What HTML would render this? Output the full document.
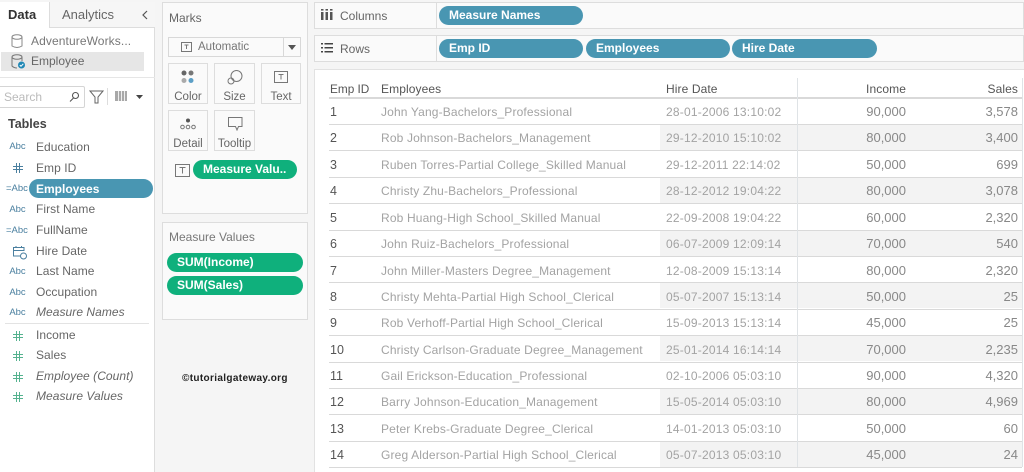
<!DOCTYPE html>
<html><head><meta charset="utf-8"><style>
html,body{margin:0;padding:0;width:1024px;height:472px;overflow:hidden;background:#f5f5f5;font-family:"Liberation Sans",sans-serif;font-size:12px;color:#555}
body{filter:blur(.3px)}
div,span,svg{position:absolute;box-sizing:border-box}
.t{white-space:nowrap;line-height:14px}
.f{left:36px;color:#666;font-size:12px;letter-spacing:.05px}
.a{left:9px;width:17px;text-align:center;font-size:9.5px;color:#4a7f9f;line-height:12px;white-space:nowrap}
.b{background:#fafafa;border:1px solid #ddd;width:40px;height:41px;text-align:center;color:#666;font-size:11.5px}
.b i{position:absolute;left:0;right:0;bottom:-1px;font-style:normal;line-height:13px}
.p{background:#4996b2;color:#fff;font-weight:bold;font-size:12px;border-radius:10px;height:19px;line-height:18px;padding-left:11px;white-space:nowrap}
.g{background:#0fb07c;border-radius:10px}
.r{left:314px;width:710px;height:26.4px}
.r span{top:6px;line-height:14px;white-space:nowrap;color:#a3a3a3;font-size:12px}
.r span:nth-child(1){color:#555;font-size:12.5px}
.r span:nth-child(2){letter-spacing:.15px}
.r span:nth-child(3){letter-spacing:.21px}
.r span:nth-child(4),.r span:nth-child(5){font-size:13px;color:#888}
.r span:nth-child(4){right:118px}
.r span:nth-child(5){right:6px}
.r.hd span{color:#555;font-size:12px;letter-spacing:.1px}
.r.hd span:nth-child(1){font-size:11.8px;letter-spacing:0}
.l{left:329px;width:693px;height:1px;background:#d9d9d9}
.s{background:#f3f3f3;left:660px;width:362px;height:25px}
.hs{left:13px}
</style></head><body>

<!-- left sidebar -->
<div style="left:0;top:2px;width:155px;height:470px;background:#fff;border-right:1px solid #ddd"></div>
<div style="left:49px;top:2px;width:106px;height:26px;background:#f6f6f6;border-left:1px solid #ddd;border-bottom:1px solid #ddd"></div>
<div class="t" style="left:8px;top:8px;font-weight:bold;color:#333;font-size:13px">Data</div>
<div class="t" style="left:62px;top:8px;color:#666;font-size:13px">Analytics</div>
<svg style="left:141px;top:10px" width="8" height="10"><path d="M6 1L2 5L6 9" fill="none" stroke="#555" stroke-width="1.2"/></svg>
<svg style="left:10px;top:33px" width="14" height="16" fill="none" stroke="#888"><ellipse cx="7" cy="4" rx="5" ry="2.3"/><path d="M2 4V13Q7 16 12 13V4"/></svg>
<div class="t" style="left:31px;top:34px;color:#777;font-size:12px;letter-spacing:.1px">AdventureWorks...</div>
<div style="left:1px;top:52px;width:143px;height:19px;background:#e6e6e6"></div>
<svg style="left:10px;top:53px" width="16" height="17" fill="none" stroke="#777"><ellipse cx="7" cy="4" rx="5" ry="2.3"/><path d="M2 4V13Q4 15 7 15M12 4V8"/><circle cx="11.5" cy="12" r="3.5" fill="#1f87b5" stroke="none"/><path d="M9.800 12L11 13.300L13.300 10.800" stroke="#fff" stroke-width="1"/></svg>
<div class="t" style="left:31px;top:54px;color:#666;font-size:12px">Employee</div>
<div style="left:0;top:77px;width:155px;height:1px;background:#e6e6e6"></div>
<div style="left:-2px;top:86px;width:87px;height:22px;background:#fff;border:1px solid #d5d5d5;border-radius:2px"></div>
<div class="t" style="left:4px;top:90px;color:#bbb;font-size:12px">Search</div>
<svg style="left:69px;top:91px" width="11" height="12" fill="none" stroke="#555" stroke-width="1.1"><circle cx="6.5" cy="4.5" r="3"/><path d="M4.500 7L1 10.500"/></svg>
<svg style="left:89px;top:89px" width="15" height="15" fill="none" stroke="#666"><path d="M1 2H14L9 8V14H6V8Z"/></svg>
<div style="left:107px;top:88px;width:1px;height:17px;background:#ddd"></div>
<svg style="left:115px;top:91px" width="12" height="10"><path d="M0 0H12V10H0Z" fill="#a8a8a8"/><path d="M3.500 0V10M6.500 0V10M9.500 0V10" stroke="#eee"/></svg>
<svg style="left:135px;top:94px" width="9" height="6"><path d="M1 1H8L4.500 5Z" fill="#444"/></svg>
<div class="t" style="left:8px;top:117px;font-weight:bold;color:#444;font-size:12.5px">Tables</div>

<div class="a" style="top:141px">Abc</div><div class="t f" style="top:140px">Education</div>
<svg class="hs" style="top:163px" width="10" height="10" fill="none" stroke="#4a7f9f" stroke-width="1"><path d="M3.500 0V10M6.500 0V10M0 3.500H10M0 6.500H10"/></svg><div class="t f" style="top:161px">Emp ID</div>
<div class="a" style="top:183px;left:6px;width:20px">=Abc</div>
<div style="left:29px;top:179px;width:124px;height:19px;background:#4996b2;border-radius:10px"></div>
<div class="t" style="left:36px;top:182px;color:#fff;font-weight:bold;font-size:12px">Employees</div>
<div class="a" style="top:204px">Abc</div><div class="t f" style="top:202px">First Name</div>
<div class="a" style="top:225px;left:6px;width:20px">=Abc</div><div class="t f" style="top:223px">FullName</div>
<svg style="left:12px;top:245px" width="16" height="15" fill="none" stroke="#4a7f9f"><path d="M9 11H1.500V2.500H12V6M1.500 5.500H12M4 1V3M9.500 1V3"/><circle cx="11.500" cy="11" r="3"/></svg>
<div class="t f" style="top:244px">Hire Date</div>
<div class="a" style="top:266px">Abc</div><div class="t f" style="top:264px">Last Name</div>
<div class="a" style="top:287px">Abc</div><div class="t f" style="top:285px">Occupation</div>
<div class="a" style="top:307px">Abc</div><div class="t f" style="top:305px;font-style:italic">Measure Names</div>
<div style="left:5px;top:323px;width:144px;height:1px;background:#e3e3e3"></div>
<svg class="hs" style="top:331px" width="10" height="10" fill="none" stroke="#55b28f" stroke-width="1"><path d="M3.500 0V10M6.500 0V10M0 3.500H10M0 6.500H10"/></svg><div class="t f" style="top:328px">Income</div>
<svg class="hs" style="top:351px" width="10" height="10" fill="none" stroke="#55b28f" stroke-width="1"><path d="M3.500 0V10M6.500 0V10M0 3.500H10M0 6.500H10"/></svg><div class="t f" style="top:348px">Sales</div>
<svg class="hs" style="top:372px" width="10" height="10" fill="none" stroke="#55b28f" stroke-width="1"><path d="M3.500 0V10M6.500 0V10M0 3.500H10M0 6.500H10"/></svg><div class="t f" style="top:369px;font-style:italic">Employee (Count)</div>
<svg class="hs" style="top:392px" width="10" height="10" fill="none" stroke="#55b28f" stroke-width="1"><path d="M3.500 0V10M6.500 0V10M0 3.500H10M0 6.500H10"/></svg><div class="t f" style="top:389px;font-style:italic">Measure Values</div>

<!-- marks -->
<div style="left:162px;top:2px;width:146px;height:212px;background:#fafafa;border:1px solid #ddd"></div>
<div class="t" style="left:169px;top:11px;color:#666;font-size:12px">Marks</div>
<div style="left:168px;top:37px;width:133px;height:20px;background:#fafafa;border:1px solid #d8d8d8"></div>
<div style="left:283px;top:38px;width:1px;height:18px;background:#d8d8d8"></div>
<svg style="left:181px;top:42px" width="11" height="10" fill="none" stroke="#777"><rect x=".5" y=".5" width="10" height="9"/><path d="M3.500 3H7.500M5.500 3V7" /></svg>
<div class="t" style="left:198px;top:40px;color:#777;font-size:11.5px">Automatic</div>
<svg style="left:288px;top:45px" width="8" height="5"><path d="M0 0H8L4 5Z" fill="#555"/></svg>

<div class="b" style="left:168px;top:63px"><i>Color</i></div>
<svg style="left:181px;top:70px" width="14" height="14"><circle cx="3" cy="3" r="2.500" fill="#666"/><circle cx="10" cy="3" r="2.500" fill="#777"/><circle cx="3" cy="10.500" r="2.500" fill="#aaa"/><circle cx="10" cy="10.500" r="2.500" fill="#5c9fc6"/></svg>
<div class="b" style="left:214px;top:63px;width:41px"><i>Size</i></div>
<svg style="left:227px;top:69px" width="16" height="16" fill="none" stroke="#777"><circle cx="9.500" cy="7" r="5.500"/><circle cx="4" cy="12" r="3"/></svg>
<div class="b" style="left:261px;top:63px"><i>Text</i></div>
<svg style="left:274px;top:71px" width="14" height="12" fill="none" stroke="#777"><rect x=".5" y=".5" width="13" height="11"/><path d="M4.500 3.500H9.500M7 3.500V8.500"/></svg>
<div class="b" style="left:168px;top:110px"><i>Detail</i></div>
<svg style="left:180px;top:118px" width="16" height="12" fill="none" stroke="#777"><circle cx="8" cy="2.500" r="2" fill="#555" stroke="none"/><circle cx="2.500" cy="9" r="1.800"/><circle cx="8" cy="9" r="1.800"/><circle cx="13.500" cy="9" r="1.800"/></svg>
<div class="b" style="left:214px;top:110px;width:41px"><i>Tooltip</i></div>
<svg style="left:228px;top:117px" width="15" height="14" fill="none" stroke="#777"><path d="M.5 .5H14V9.500H10.500L9 13L7.500 9.500H.5Z"/></svg>

<svg style="left:175px;top:164px" width="15" height="13" fill="none" stroke="#777"><rect x=".5" y=".5" width="14" height="12"/><path d="M4.500 3.500H10.500M7.500 3.500V9.500"/></svg>
<div class="p g" style="left:193px;top:160px;width:104px;padding-left:10px;font-size:12px">Measure Valu..</div>

<div style="left:162px;top:222px;width:146px;height:98px;background:#fafafa;border:1px solid #ddd"></div>
<div class="t" style="left:169px;top:230px;color:#777;font-size:12px">Measure Values</div>
<div class="p g" style="left:167px;top:253px;width:136px;padding-left:10px">SUM(Income)</div>
<div class="p g" style="left:167px;top:276px;width:136px;padding-left:10px">SUM(Sales)</div>
<div class="t" style="left:182px;top:372px;color:#222;font-weight:bold;font-size:10px;letter-spacing:.35px">©tutorialgateway.org</div>

<!-- shelves -->
<div style="left:314px;top:2px;width:710px;height:27px;background:#fafafa;border:1px solid #ddd"></div>
<div style="left:436px;top:3px;width:1px;height:25px;background:#ddd"></div>
<svg style="left:321px;top:9px" width="12" height="12" fill="#555"><rect x="0" y="3" width="2.500" height="8"/><rect x="4.500" y="3" width="2.500" height="8"/><rect x="9" y="3" width="2.500" height="8"/><rect x="0" y="0" width="2.500" height="1.600"/><rect x="4.500" y="0" width="2.500" height="1.600"/><rect x="9" y="0" width="2.500" height="1.600"/></svg>
<div class="t" style="left:340px;top:9px;color:#666;font-size:12px">Columns</div>
<div class="p" style="left:439px;top:6px;width:144px;padding-left:10px">Measure Names</div>

<div style="left:314px;top:35px;width:710px;height:27px;background:#fafafa;border:1px solid #ddd"></div>
<div style="left:436px;top:36px;width:1px;height:25px;background:#ddd"></div>
<svg style="left:321px;top:43px" width="12" height="10" fill="#444"><rect x="0" y="0" width="2" height="1.500"/><rect x="3.500" y="0" width="8.500" height="1.500"/><rect x="0" y="4" width="2" height="1.500"/><rect x="3.500" y="4" width="8.500" height="1.500"/><rect x="0" y="8" width="2" height="1.500"/><rect x="3.500" y="8" width="8.500" height="1.500"/></svg>
<div class="t" style="left:340px;top:42px;color:#666;font-size:12px">Rows</div>
<div class="p" style="left:439px;top:39px;width:144px;padding-left:10px">Emp ID</div>
<div class="p" style="left:586px;top:39px;width:144px;padding-left:10px">Employees</div>
<div class="p" style="left:732px;top:39px;width:145px;padding-left:10px">Hire Date</div>

<!-- table -->
<div style="left:314px;top:69px;width:710px;height:403px;background:#fff;border:1px solid #e2e2e2;border-right:0;border-bottom:0"></div>
<div class="s" style="top:125px"></div>
<div class="s" style="top:178px"></div>
<div class="s" style="top:231px"></div>
<div class="s" style="top:283px"></div>
<div class="s" style="top:336px"></div>
<div class="s" style="top:389px"></div>
<div class="s" style="top:442px"></div>
<div class="l" style="top:97px;height:2px"></div>
<div class="l" style="top:124px"></div><div class="l" style="top:150px"></div><div class="l" style="top:177px"></div><div class="l" style="top:203px"></div><div class="l" style="top:230px"></div><div class="l" style="top:256px"></div><div class="l" style="top:282px"></div><div class="l" style="top:309px"></div><div class="l" style="top:335px"></div><div class="l" style="top:362px"></div><div class="l" style="top:388px"></div><div class="l" style="top:414px"></div><div class="l" style="top:441px"></div><div class="l" style="top:467px"></div>
<div style="left:797px;top:78px;width:1px;height:389px;background:#dfe3e6"></div>
<div style="left:1022px;top:78px;width:1px;height:389px;background:#dfe3e6"></div>

<div class="r hd" style="top:76px"><span style="left:16px">Emp ID</span><span style="left:67px">Employees</span><span style="left:352px">Hire Date</span><span>Income</span><span>Sales</span></div>

<div class="r" style="top:99px"><span style="left:16px">1</span><span style="left:67px">John Yang-Bachelors_Professional</span><span style="left:352px">28-01-2006 13:10:02</span><span>90,000</span><span>3,578</span></div>
<div class="r" style="top:125px"><span style="left:16px">2</span><span style="left:67px">Rob Johnson-Bachelors_Management</span><span style="left:352px">29-12-2010 15:10:02</span><span>80,000</span><span>3,400</span></div>
<div class="r" style="top:152px"><span style="left:16px">3</span><span style="left:67px">Ruben Torres-Partial College_Skilled Manual</span><span style="left:352px">29-12-2011 22:14:02</span><span>50,000</span><span>699</span></div>
<div class="r" style="top:178px"><span style="left:16px">4</span><span style="left:67px">Christy Zhu-Bachelors_Professional</span><span style="left:352px">28-12-2012 19:04:22</span><span>80,000</span><span>3,078</span></div>
<div class="r" style="top:205px"><span style="left:16px">5</span><span style="left:67px">Rob Huang-High School_Skilled Manual</span><span style="left:352px">22-09-2008 19:04:22</span><span>60,000</span><span>2,320</span></div>
<div class="r" style="top:231px"><span style="left:16px">6</span><span style="left:67px">John Ruiz-Bachelors_Professional</span><span style="left:352px">06-07-2009 12:09:14</span><span>70,000</span><span>540</span></div>
<div class="r" style="top:258px"><span style="left:16px">7</span><span style="left:67px">John Miller-Masters Degree_Management</span><span style="left:352px">12-08-2009 15:13:14</span><span>80,000</span><span>2,320</span></div>
<div class="r" style="top:284px"><span style="left:16px">8</span><span style="left:67px">Christy Mehta-Partial High School_Clerical</span><span style="left:352px">05-07-2007 15:13:14</span><span>50,000</span><span>25</span></div>
<div class="r" style="top:310px"><span style="left:16px">9</span><span style="left:67px">Rob Verhoff-Partial High School_Clerical</span><span style="left:352px">15-09-2013 15:13:14</span><span>45,000</span><span>25</span></div>
<div class="r" style="top:337px"><span style="left:16px">10</span><span style="left:67px">Christy Carlson-Graduate Degree_Management</span><span style="left:352px">25-01-2014 16:14:14</span><span>70,000</span><span>2,235</span></div>
<div class="r" style="top:363px"><span style="left:16px">11</span><span style="left:67px">Gail Erickson-Education_Professional</span><span style="left:352px">02-10-2006 05:03:10</span><span>90,000</span><span>4,320</span></div>
<div class="r" style="top:389px"><span style="left:16px">12</span><span style="left:67px">Barry Johnson-Education_Management</span><span style="left:352px">15-05-2014 05:03:10</span><span>80,000</span><span>4,969</span></div>
<div class="r" style="top:416px"><span style="left:16px">13</span><span style="left:67px">Peter Krebs-Graduate Degree_Clerical</span><span style="left:352px">14-01-2013 05:03:10</span><span>50,000</span><span>60</span></div>
<div class="r" style="top:442px"><span style="left:16px">14</span><span style="left:67px">Greg Alderson-Partial High School_Clerical</span><span style="left:352px">05-07-2013 05:03:10</span><span>45,000</span><span>24</span></div>
</body></html>
